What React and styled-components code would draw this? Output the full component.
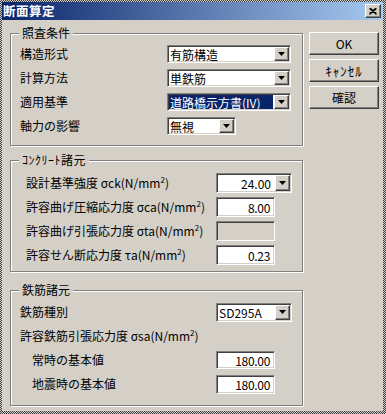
import React from 'react';
import styled, { createGlobalStyle, css } from 'styled-components';

const COLORS = {
	face: '#d4d0c8',
	shadow: '#808080',
	darkShadow: '#404040',
	highlight: '#ffffff',
	titleStart: '#0a246a',
	titleEnd: '#a6caf0',
	select: '#0a246a',
};

const FONT = `"Noto Sans CJK JP", "Noto Sans", sans-serif`;

const GlobalStyle = createGlobalStyle`
	html, body {
		margin: 0;
		padding: 0;
		background: #ffffff;
	}
	body {
		font-family: ${FONT};
		font-size: 12px;
		color: #000;
	}
`;

// classic 3D edges
const raised = css`
	border: 1px solid;
	border-color: ${COLORS.highlight} ${COLORS.darkShadow} ${COLORS.darkShadow}
		${COLORS.highlight};
	box-shadow: inset -1px -1px 0 ${COLORS.shadow}, inset 1px 1px 0 ${COLORS.face};
	background: ${COLORS.face};
`;

const sunken = css`
	border: 1px solid;
	border-color: ${COLORS.shadow} ${COLORS.highlight} ${COLORS.highlight}
		${COLORS.shadow};
	box-shadow: inset 1px 1px 0 ${COLORS.darkShadow}, inset -1px -1px 0 ${COLORS.face};
`;

function Arrow() {
	return (
		<svg width="7" height="4" viewBox="0 0 7 4">
			<polygon points="0,0 7,0 3.5,4" fill="#000" />
		</svg>
	);
}

function CloseGlyph() {
	return (
		<svg width="8" height="7" viewBox="0 0 8 7">
			<path d="M0.5 0.5 L7.5 6.5 M1.5 0.5 L7.5 5.5 M7.5 0.5 L0.5 6.5 M6.5 0.5 L0.5 5.5" stroke="#000" strokeWidth="1.1" fill="none" />
		</svg>
	);
}

function Combo({ width, height, value, align, selected }) {
	return (
		<ComboBox $width={width} $height={height}>
			<ComboText $align={align} $selected={selected}>
				{value}
			</ComboText>
			<DropButton>
				<Arrow />
			</DropButton>
		</ComboBox>
	);
}

const Unit = ({ sym }) => (
	<>
		{' '}
		{sym}(N/mm<Sup>2</Sup>)
	</>
);

export default function App() {
	return (
		<>
			<GlobalStyle />
			<Frame>
				<Window>
					<TitleBar>
						<Title>断面算定</Title>
						<CloseButton>
							<CloseGlyph />
						</CloseButton>
					</TitleBar>
					<Body>
						<Groups>
							<GroupBox $height={113} $top={0} $padTop={8} $padLeft={9} $labelWidth={147}>
								<Legend>照査条件</Legend>
								<Label>構造形式</Label>
								<Combo width={124} height={18} value="有筋構造" />
								<Label>計算方法</Label>
								<Combo width={124} height={18} value="単鉄筋" />
								<Label>適用基準</Label>
								<Combo width={124} height={18} value="道路橋示方書(IV)" selected />
								<Label>軸力の影響</Label>
								<Combo width={69} height={18} value="無視" />
							</GroupBox>

							<GroupBox $height={112} $top={14} $padTop={10} $padLeft={15} $labelWidth={190}>
								<Legend $spread>ｺﾝｸﾘｰﾄ諸元</Legend>
								<Label>
									設計基準強度<Unit sym="σck" />
								</Label>
								<Combo width={76} height={20} value="24.00" align="right" />
								<Label>
									許容曲げ圧縮応力度<Unit sym="σca" />
								</Label>
								<TextField $height={20}>8.00</TextField>
								<Label>
									許容曲げ引張応力度<Unit sym="σta" />
								</Label>
								<TextField $height={20} $disabled />
								<Label>
									許容せん断応力度<Unit sym="τa" />
								</Label>
								<TextField $height={20}>0.23</TextField>
							</GroupBox>

							<GroupBox $height={116} $top={18} $padTop={9} $padLeft={9} $labelWidth={196}>
								<Legend>鉄筋諸元</Legend>
								<Label>鉄筋種別</Label>
								<Combo width={76} height={19} value="SD295A" />
								<Label $span>
									許容鉄筋引張応力度<Unit sym="σsa" />
								</Label>
								<Label $indent={12}>常時の基本値</Label>
								<TextField $height={18}>180.00</TextField>
								<Label $indent={12}>地震時の基本値</Label>
								<TextField $height={19}>180.00</TextField>
							</GroupBox>
						</Groups>

						<Buttons>
							<PushButton>OK</PushButton>
							<PushButton $spread>ｷｬﾝｾﾙ</PushButton>
							<PushButton>確認</PushButton>
						</Buttons>
					</Body>
				</Window>
			</Frame>
		</>
	);
}

// checkered window edge as seen in the capture
const Frame = styled.div`
	width: 386px;
	height: 414px;
	box-sizing: border-box;
	padding: 2px 3px 3px 2px;
	background: repeating-conic-gradient(#3c3c3c 0 25%, ${COLORS.face} 0 50%) 0 0 / 2px 2px;
`;

const Window = styled.div`
	height: 100%;
	background: ${COLORS.face};
	display: flex;
	flex-direction: column;
`;

const TitleBar = styled.div`
	height: 18px;
	flex-shrink: 0;
	display: flex;
	align-items: center;
	padding: 0 2px 0 1px;
	background: linear-gradient(to right, ${COLORS.titleStart}, ${COLORS.titleEnd});
	color: #fff;
	font-weight: bold;
	font-size: 12.5px;
	letter-spacing: 0.5px;
`;

const Title = styled.span`
	flex: 1;
	line-height: 18px;
`;

const CloseButton = styled.span`
	${raised};
	box-sizing: border-box;
	width: 16px;
	height: 14px;
	display: flex;
	align-items: center;
	justify-content: center;
`;

const Body = styled.div`
	display: flex;
	align-items: flex-start;
	padding-left: 8px;
`;

const Groups = styled.div`
	display: flex;
	flex-direction: column;
	width: 293px;
	padding-top: 13px;
`;

const GroupBox = styled.section`
	position: relative;
	box-sizing: border-box;
	height: ${(p) => p.$height}px;
	margin-top: ${(p) => p.$top}px;
	padding: ${(p) => p.$padTop}px 0 0 ${(p) => p.$padLeft}px;
	border: 1px solid ${COLORS.shadow};
	box-shadow: 1px 1px 0 ${COLORS.highlight}, inset 1px 1px 0 ${COLORS.highlight};
	display: grid;
	grid-template-columns: ${(p) => p.$labelWidth}px 1fr;
	grid-auto-rows: 24px;
	align-items: center;
	align-content: start;
`;

// half-width kana render narrow, open them up a little
const Legend = styled.h3`
	position: absolute;
	top: -8px;
	left: 8px;
	margin: 0;
	padding: 0 3px;
	background: ${COLORS.face};
	font-size: 12px;
	font-weight: normal;
	line-height: 14px;
	letter-spacing: ${(p) => (p.$spread ? '0.5px' : '0')};
`;

const Label = styled.span`
	white-space: nowrap;
	line-height: 14px;
	padding-left: ${(p) => p.$indent || 0}px;
	grid-column: ${(p) => (p.$span ? '1 / -1' : 'auto')};
`;

const Sup = styled.sup`
	font-size: 8px;
	vertical-align: 5px;
	line-height: 0;
`;

const ComboBox = styled.div`
	${sunken};
	box-sizing: border-box;
	width: ${(p) => p.$width}px;
	height: ${(p) => p.$height}px;
	background: #fff;
	display: flex;
	padding: 1px;
`;

const ComboText = styled.span`
	flex: 1;
	display: flex;
	align-items: center;
	justify-content: ${(p) => (p.$align === 'right' ? 'flex-end' : 'flex-start')};
	padding: 0 3px 0 1px;
	margin-right: 1px;
	white-space: nowrap;
	overflow: hidden;
	background: ${(p) => (p.$selected ? COLORS.select : 'transparent')};
	color: ${(p) => (p.$selected ? '#fff' : '#000')};
`;

const DropButton = styled.span`
	${raised};
	box-sizing: border-box;
	width: 15px;
	display: flex;
	align-items: center;
	justify-content: center;
`;

const TextField = styled.div`
	${sunken};
	box-sizing: border-box;
	width: 59px;
	height: ${(p) => p.$height}px;
	background: ${(p) => (p.$disabled ? COLORS.face : '#fff')};
	display: flex;
	align-items: center;
	justify-content: flex-end;
	padding-right: 4px;
	letter-spacing: -0.3px;
`;

const Buttons = styled.div`
	display: flex;
	flex-direction: column;
	gap: 4px;
	margin-left: 6px;
	padding-top: 12px;
`;

const PushButton = styled.button`
	${raised};
	box-sizing: border-box;
	width: 70px;
	height: 23px;
	padding: 0;
	font-family: ${FONT};
	font-size: ${(p) => (p.$spread ? '13px' : '12px')};
	letter-spacing: ${(p) => (p.$spread ? '1px' : '0')};
	color: #000;
`;
